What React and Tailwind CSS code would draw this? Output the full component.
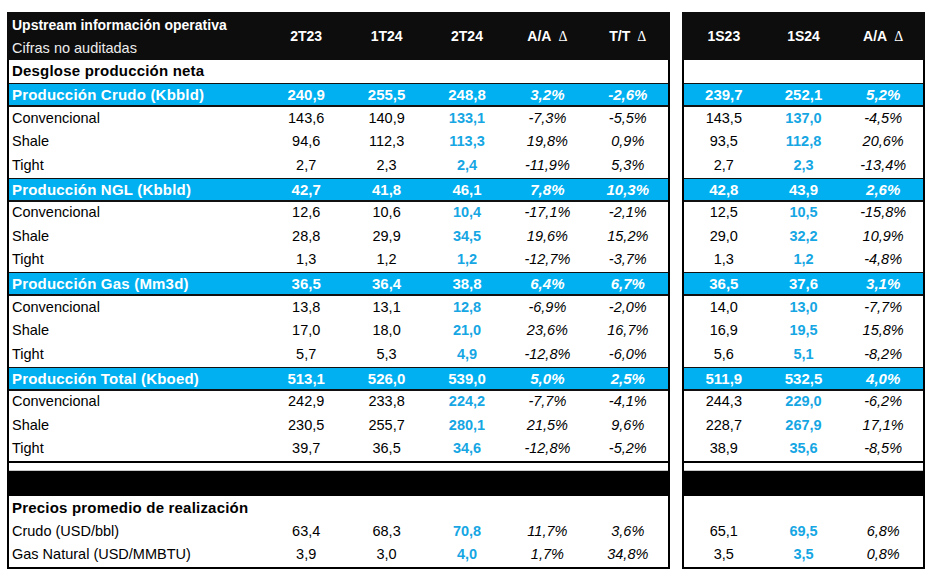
import React from "react";

const groups = [
  {
    title: "Producción Crudo (Kbbld)",
    vals: ["240,9", "255,5", "248,8", "3,2%", "-2,6%"],
    sem: ["239,7", "252,1", "5,2%"],
    rows: [
      ["Convencional", ["143,6", "140,9", "133,1", "-7,3%", "-5,5%"], ["143,5", "137,0", "-4,5%"]],
      ["Shale", ["94,6", "112,3", "113,3", "19,8%", "0,9%"], ["93,5", "112,8", "20,6%"]],
      ["Tight", ["2,7", "2,3", "2,4", "-11,9%", "5,3%"], ["2,7", "2,3", "-13,4%"]],
    ],
  },
  {
    title: "Producción NGL (Kbbld)",
    vals: ["42,7", "41,8", "46,1", "7,8%", "10,3%"],
    sem: ["42,8", "43,9", "2,6%"],
    rows: [
      ["Convencional", ["12,6", "10,6", "10,4", "-17,1%", "-2,1%"], ["12,5", "10,5", "-15,8%"]],
      ["Shale", ["28,8", "29,9", "34,5", "19,6%", "15,2%"], ["29,0", "32,2", "10,9%"]],
      ["Tight", ["1,3", "1,2", "1,2", "-12,7%", "-3,7%"], ["1,3", "1,2", "-4,8%"]],
    ],
  },
  {
    title: "Producción Gas (Mm3d)",
    vals: ["36,5", "36,4", "38,8", "6,4%", "6,7%"],
    sem: ["36,5", "37,6", "3,1%"],
    rows: [
      ["Convencional", ["13,8", "13,1", "12,8", "-6,9%", "-2,0%"], ["14,0", "13,0", "-7,7%"]],
      ["Shale", ["17,0", "18,0", "21,0", "23,6%", "16,7%"], ["16,9", "19,5", "15,8%"]],
      ["Tight", ["5,7", "5,3", "4,9", "-12,8%", "-6,0%"], ["5,6", "5,1", "-8,2%"]],
    ],
  },
  {
    title: "Producción Total (Kboed)",
    vals: ["513,1", "526,0", "539,0", "5,0%", "2,5%"],
    sem: ["511,9", "532,5", "4,0%"],
    rows: [
      ["Convencional", ["242,9", "233,8", "224,2", "-7,7%", "-4,1%"], ["244,3", "229,0", "-6,2%"]],
      ["Shale", ["230,5", "255,7", "280,1", "21,5%", "9,6%"], ["228,7", "267,9", "17,1%"]],
      ["Tight", ["39,7", "36,5", "34,6", "-12,8%", "-5,2%"], ["38,9", "35,6", "-8,5%"]],
    ],
  },
];

const prices = [
  ["Crudo (USD/bbl)", ["63,4", "68,3", "70,8", "11,7%", "3,6%"], ["65,1", "69,5", "6,8%"]],
  ["Gas Natural (USD/MMBTU)", ["3,9", "3,0", "4,0", "1,7%", "34,8%"], ["3,5", "3,5", "0,8%"]],
];

const Delta = () => (
  <span className="ml-[7px] font-normal font-['Liberation_Serif',serif] text-[14px]">Δ</span>
);

// regular value cell; blueCol = highlighted current-period column, pct = italic
const Cell = ({ v, blueCol, pct }) => (
  <div
    className={`flex items-center justify-center text-[14.5px] ${
      blueCol ? "font-bold text-[#15a6e3]" : pct ? "italic text-black" : "text-black"
    }`}
  >
    {v}
  </div>
);

const BlueCell = ({ v, pct }) => (
  <div className={`flex items-center justify-center text-[15px] font-bold text-white ${pct ? "italic" : ""}`}>
    {v}
  </div>
);

const LEFT = "grid grid-cols-[257px_repeat(5,1fr)]";
const RIGHT = "grid grid-cols-3";

function LeftTable() {
  return (
    <div className="w-[663px] flex flex-col">
      {/* Header */}
      <div className={`${LEFT} h-[48px] bg-[#0d0d0d] text-white px-[2px]`}>
        <div className="flex flex-col pl-[3px] pt-[3px]">
          <span className="text-[14px] font-bold leading-[20px]">Upstream información operativa</span>
          <span className="text-[14.5px] leading-[20px] mt-[3px] text-[#ececec]">Cifras no auditadas</span>
        </div>
        {["2T23", "1T24", "2T24"].map((h) => (
          <div key={h} className="flex items-center justify-center text-[14px] font-bold">{h}</div>
        ))}
        <div className="flex items-center justify-center text-[14px] font-bold">A/A<Delta /></div>
        <div className="flex items-center justify-center text-[14px] font-bold">T/T<Delta /></div>
      </div>

      <div className="border-x-2 border-black">
        <div className="h-[23px] flex items-center pl-[3px] text-[15px] font-bold tracking-[0.2px] text-black">
          Desglose producción neta
        </div>

        {groups.map((g) => (
          <div key={g.title}>
            <div className={`${LEFT} h-[24px] bg-[#00b0f0] border-t border-b-2 border-[#111]`}>
              <div className="flex items-center pl-[3px] text-[15px] font-bold tracking-[0.2px] text-white">{g.title}</div>
              {g.vals.map((v, i) => (
                <BlueCell key={i} v={v} pct={i > 2} />
              ))}
            </div>
            {g.rows.map(([label, vals]) => (
              <div key={label} className={`${LEFT} h-[23.5px]`}>
                <div className="flex items-center pl-[3px] text-[14.5px] text-black">{label}</div>
                {vals.map((v, i) => (
                  <Cell key={i} v={v} blueCol={i === 2} pct={i > 2} />
                ))}
              </div>
            ))}
          </div>
        ))}

        {/* spacer */}
        <div className="h-[10px] border-t-2 border-black border-b border-b-[#c8c8c8]" />
      </div>

      <div className="h-[25px] bg-black" />

      <div className="border-x-2 border-b-2 border-black">
        <div className="h-[24px] flex items-center pl-[3px] text-[15px] font-bold tracking-[0.2px] text-black">
          Precios promedio de realización
        </div>
        {prices.map(([label, vals]) => (
          <div key={label} className={`${LEFT} h-[23.5px]`}>
            <div className="flex items-center pl-[3px] text-[14.5px] text-black">{label}</div>
            {vals.map((v, i) => (
              <Cell key={i} v={v} blueCol={i === 2} pct={i > 2} />
            ))}
          </div>
        ))}
      </div>
    </div>
  );
}

function RightTable() {
  return (
    <div className="w-[243px] flex flex-col">
      <div className={`${RIGHT} h-[48px] bg-[#0d0d0d] text-white px-[2px]`}>
        <div className="flex items-center justify-center text-[14px] font-bold">1S23</div>
        <div className="flex items-center justify-center text-[14px] font-bold">1S24</div>
        <div className="flex items-center justify-center text-[14px] font-bold">A/A<Delta /></div>
      </div>

      <div className="border-x-2 border-black">
        <div className="h-[23px]" />
        {groups.map((g) => (
          <div key={g.title}>
            <div className={`${RIGHT} h-[24px] bg-[#00b0f0] border-t border-b-2 border-[#111]`}>
              {g.sem.map((v, i) => (
                <BlueCell key={i} v={v} pct={i === 2} />
              ))}
            </div>
            {g.rows.map(([label, , sem]) => (
              <div key={label} className={`${RIGHT} h-[23.5px]`}>
                {sem.map((v, i) => (
                  <Cell key={i} v={v} blueCol={i === 1} pct={i === 2} />
                ))}
              </div>
            ))}
          </div>
        ))}
        <div className="h-[10px] border-t-2 border-black border-b border-b-[#c8c8c8]" />
      </div>

      <div className="h-[25px] bg-black" />

      <div className="border-x-2 border-b-2 border-black">
        <div className="h-[24px]" />
        {prices.map(([label, , sem]) => (
          <div key={label} className={`${RIGHT} h-[23.5px]`}>
            {sem.map((v, i) => (
              <Cell key={i} v={v} blueCol={i === 1} pct={i === 2} />
            ))}
          </div>
        ))}
      </div>
    </div>
  );
}

export default function App() {
  return (
    <div className="w-[931px] h-[581px] bg-white font-['Liberation_Sans',Arial,sans-serif] overflow-hidden">
      <div className="flex gap-[12px] pl-[7px] pt-[12px]">
        <LeftTable />
        <RightTable />
      </div>
    </div>
  );
}
